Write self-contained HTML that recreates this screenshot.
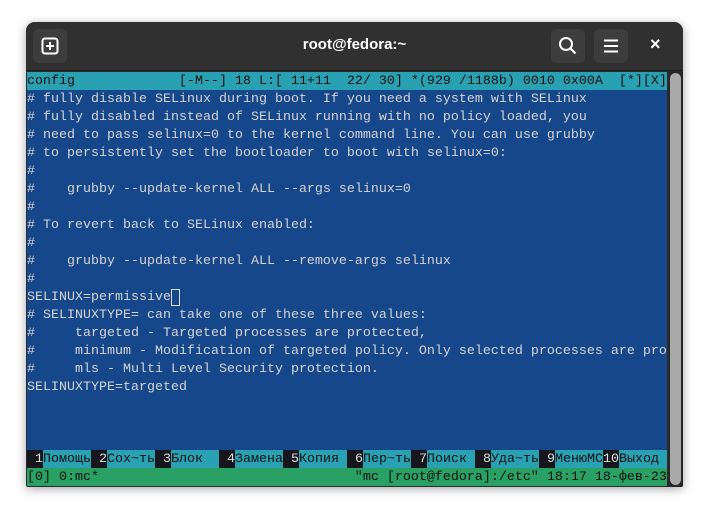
<!DOCTYPE html>
<html><head><meta charset="utf-8"><style>
*{margin:0;padding:0;box-sizing:border-box}
body{width:708px;height:515px;background:#fff;position:relative;overflow:hidden;font-family:"Liberation Sans",sans-serif}
.win{position:absolute;left:26px;top:22px;width:657px;height:465px;background:#2b2b2b;border-radius:9px 9px 2px 2px;box-shadow:0 2px 10px rgba(0,0,0,.35);overflow:hidden}
.hdr{position:absolute;left:0;top:0;width:657px;height:49px;background:#303030;border-bottom:1px solid #1e1e1e}
.btn{position:absolute;top:7px;width:34px;height:34px;background:#3d3d3d;border-radius:6px}
.title{position:absolute;left:0;right:0;top:14px;text-align:center;color:#fff;font-weight:bold;font-size:15px}
.term{position:absolute;left:1px;top:50px;width:640px;height:414px;background:#16478b;font-family:"Liberation Mono","DejaVu Sans Mono",monospace;font-size:13.33px;line-height:18px;color:#d4d4d4;white-space:pre}
.row{position:absolute;left:0;height:18px;width:640px;overflow:hidden;padding-top:1px}
.sb{position:absolute;left:643px;top:50px;width:14px;height:415px;background:#262626}
.thumb{position:absolute;left:644px;top:51px;width:11px;height:412px;background:#a9a9a9;border-radius:6px}
.k{position:absolute;top:1px;height:18px;color:#ddd;text-align:right}
.kb{position:absolute;top:0;height:18px;background:#16161c}
.l{position:absolute;top:1px;height:18px;color:#111}
</style></head><body>
<div class="win">
 <div class="hdr">
  <div class="btn" style="left:7px"><svg width="34" height="34"><rect x="9.5" y="9.5" width="15" height="15" rx="2.5" fill="none" stroke="#fff" stroke-width="2"/><path d="M17 13v8M13 17h8" stroke="#fff" stroke-width="2"/></svg></div>
  <div class="title">root@fedora:~</div>
  <div class="btn" style="left:525px"><svg width="34" height="34"><circle cx="15" cy="15" r="6" fill="none" stroke="#fff" stroke-width="2"/><path d="M19.5 19.5l5 5" stroke="#fff" stroke-width="2.2"/></svg></div>
  <div class="btn" style="left:568px"><svg width="34" height="34"><path d="M10 11.5h14M10 17h14M10 22.5h14" stroke="#fff" stroke-width="2"/></svg></div>
  <div style="position:absolute;left:624px;top:12px;color:#fff;font-size:18px;font-weight:bold">×</div>
 </div>
 <div class="term">
<div class="row" style="top:0;background:#2aa0b3;color:#111">config             [-M--] 18 L:[ 11+11  22/ 30] *(929 /1188b) 0010 0x00A  [*][X]</div>
<div class="row" style="top:18px"># fully disable SELinux during boot. If you need a system with SELinux</div>
<div class="row" style="top:36px"># fully disabled instead of SELinux running with no policy loaded, you</div>
<div class="row" style="top:54px"># need to pass selinux=0 to the kernel command line. You can use grubby</div>
<div class="row" style="top:72px"># to persistently set the bootloader to boot with selinux=0:</div>
<div class="row" style="top:90px">#</div>
<div class="row" style="top:108px">#    grubby --update-kernel ALL --args selinux=0</div>
<div class="row" style="top:126px">#</div>
<div class="row" style="top:144px"># To revert back to SELinux enabled:</div>
<div class="row" style="top:162px">#</div>
<div class="row" style="top:180px">#    grubby --update-kernel ALL --remove-args selinux</div>
<div class="row" style="top:198px">#</div>
<div class="row" style="top:216px">SELINUX=permissive<span style="position:absolute;left:144px;top:1px;width:9px;height:17px;border:1px solid #ddd"></span></div>
<div class="row" style="top:234px"># SELINUXTYPE= can take one of these three values:</div>
<div class="row" style="top:252px">#     targeted - Targeted processes are protected,</div>
<div class="row" style="top:270px">#     minimum - Modification of targeted policy. Only selected processes are pro</div>
<div class="row" style="top:288px">#     mls - Multi Level Security protection.</div>
<div class="row" style="top:306px">SELINUXTYPE=targeted</div>
<div class="row" style="top:378px;background:#2aa0b3;padding:0">
<span class="kb" style="left:0;width:16px"></span><span class="k" style="left:0;width:16px">1</span><span class="l" style="left:16px">Помощь</span>
<span class="kb" style="left:64px;width:16px"></span><span class="k" style="left:64px;width:16px">2</span><span class="l" style="left:80px">Сох~ть</span>
<span class="kb" style="left:128px;width:16px"></span><span class="k" style="left:128px;width:16px">3</span><span class="l" style="left:144px">Блок</span>
<span class="kb" style="left:192px;width:16px"></span><span class="k" style="left:192px;width:16px">4</span><span class="l" style="left:208px">Замена</span>
<span class="kb" style="left:256px;width:16px"></span><span class="k" style="left:256px;width:16px">5</span><span class="l" style="left:272px">Копия</span>
<span class="kb" style="left:320px;width:16px"></span><span class="k" style="left:320px;width:16px">6</span><span class="l" style="left:336px">Пер~ть</span>
<span class="kb" style="left:384px;width:16px"></span><span class="k" style="left:384px;width:16px">7</span><span class="l" style="left:400px">Поиск</span>
<span class="kb" style="left:448px;width:16px"></span><span class="k" style="left:448px;width:16px">8</span><span class="l" style="left:464px">Уда~ть</span>
<span class="kb" style="left:512px;width:16px"></span><span class="k" style="left:512px;width:16px">9</span><span class="l" style="left:528px">МенюMC</span>
<span class="kb" style="left:576px;width:16px"></span><span class="k" style="left:576px;width:16px">10</span><span class="l" style="left:592px">Выход</span>
</div>
<div class="row" style="top:396px;background:#29a064;color:#111">[0] 0:mc*                                "mc [root@fedora]:/etc" 18:17 18-фев-23</div>
 </div>
 <div class="sb"></div><div class="thumb"></div>
</div>
</body></html>
